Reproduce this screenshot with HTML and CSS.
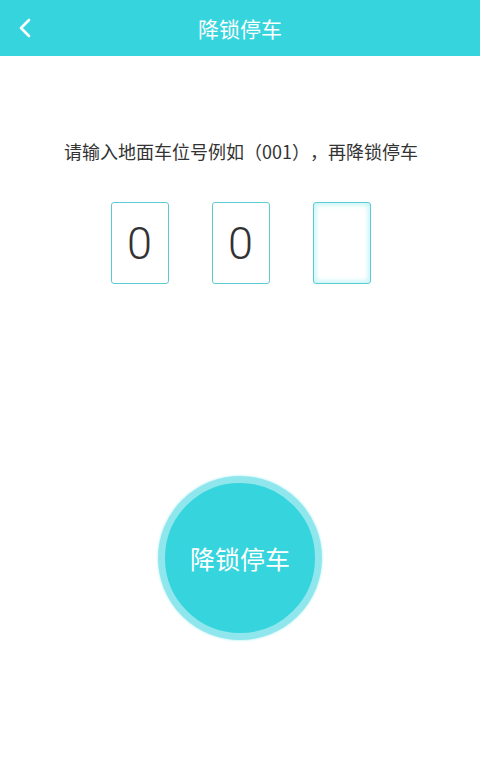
FILE: index.html
```html
<!doctype html>
<html lang="zh-CN">
    <head>
        <meta charset="UTF-8" />
        <meta name="viewport" content="width=device-width, initial-scale=1.0" />
        <title>降锁停车</title>
        <link rel="stylesheet" href="styles.css">
    </head>
    <body>
        <div class="header">
            <a class="back" href="#">
                <svg width="14" height="20" viewBox="0 0 14 20">
                    <path d="M11 2 L3 10 L11 18" fill="none" stroke="#fff" stroke-width="2.6" stroke-linecap="round" stroke-linejoin="round"/>
                </svg>
            </a>
            <h1>降锁停车</h1>
        </div>

        <div class="content">
            <p class="tip">请输入地面车位号例如（001），再降锁停车</p>

            <div class="code">
                <div class="digit">0</div>
                <div class="digit">0</div>
                <div class="digit active"></div>
            </div>

            <div class="action">
                <button class="park-btn">降锁停车</button>
            </div>
        </div>
    </body>
</html>
```

FILE: styles.css
```css
body {
    margin: 0;
    background: #fff;
    font-family: "Noto Sans CJK SC", "Noto Sans", sans-serif;
    color: #333;
}

.header {
    height: 56px;
    background: #36d4dd;
    display: flex;
    align-items: center;
    justify-content: center;
    position: relative;
}

.header h1 {
    margin: 0;
    color: #fff;
    font-size: 21px;
    font-weight: 400;
}

.back {
    position: absolute;
    left: 18px;
    top: 18px;
    display: block;
    height: 20px;
}

.content {
    display: flex;
    flex-direction: column;
    align-items: center;
    padding-bottom: 120px;
}

.tip {
    margin: 80px 0 0;
    font-size: 18px;
    line-height: 30px;
    color: #333;
    text-spacing-trim: space-all;
    margin-left: 2px;
}

.code {
    display: flex;
    gap: 43px;
    margin-top: 36px;
    margin-left: 1px;
}

.digit {
    width: 56px;
    height: 80px;
    border: 1px solid #5ccbd2;
    border-radius: 3px;
    display: flex;
    align-items: center;
    justify-content: center;
    font-family: Roboto, "Noto Sans", sans-serif;
    font-weight: 300;
    font-size: 45px;
    color: #333;
}

.digit.active {
    box-shadow: inset 0 0 5px 2px #c4f4f7;
}

.action {
    margin-top: 192px;
}

.park-btn {
    width: 164px;
    height: 164px;
    border-radius: 50%;
    border: 7px solid #8fe7ed;
    background: #36d4dd;
    box-shadow: 0 0 2px 1px #d4f7f9;
    color: #fff;
    font-family: "Noto Sans CJK SC", sans-serif;
    font-size: 25px;
    padding: 0;
    cursor: pointer;
}
```
